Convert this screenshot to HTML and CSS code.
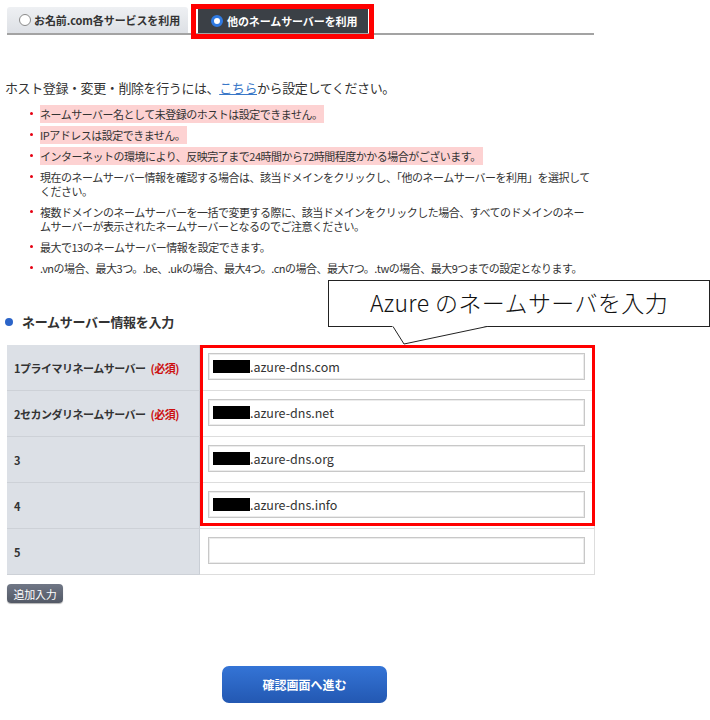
FILE: index.html
```html
<!DOCTYPE html>
<html lang="ja">
<head>
    <meta charset="UTF-8">
    <title>ネームサーバーの設定</title>
    <link rel="stylesheet" href="styles.css">
</head>
<body>
<div class="page">
    <div class="tabs">
        <div class="tab tab-off"><span class="radio"></span>お名前.com各サービスを利用</div>
        <div class="tab tab-on"><span class="radio"></span>他のネームサーバーを利用</div>
    </div>
    <div class="mark mark-tab"></div>

    <p class="intro">ホスト登録・変更・削除を行うには、<a href="#">こちら</a>から設定してください。</p>

    <ul class="notes">
        <li><span class="warn">ネームサーバー名として未登録のホストは設定できません。</span></li>
        <li><span class="warn">IPアドレスは設定できません。</span></li>
        <li><span class="warn">インターネットの環境により、反映完了まで24時間から72時間程度かかる場合がございます。</span></li>
        <li>現在のネームサーバー情報を確認する場合は、該当ドメインをクリックし、「他のネームサーバーを利用」を選択してください。</li>
        <li>複数ドメインのネームサーバーを一括で変更する際に、該当ドメインをクリックした場合、すべてのドメインのネームサーバーが表示されたネームサーバーとなるのでご注意ください。</li>
        <li>最大で13のネームサーバー情報を設定できます。</li>
        <li>.vnの場合、最大3つ。.be、.ukの場合、最大4つ。.cnの場合、最大7つ。.twの場合、最大9つまでの設定となります。</li>
    </ul>

    <h2 class="section">ネームサーバー情報を入力</h2>

    <table class="ns-table">
        <tr>
            <th>1プライマリネームサーバー <span class="req">(必須)</span></th>
            <td><div class="field"><span class="hide"></span>.azure-dns.com</div></td>
        </tr>
        <tr>
            <th>2セカンダリネームサーバー <span class="req">(必須)</span></th>
            <td><div class="field"><span class="hide"></span>.azure-dns.net</div></td>
        </tr>
        <tr>
            <th>3</th>
            <td><div class="field"><span class="hide"></span>.azure-dns.org</div></td>
        </tr>
        <tr>
            <th>4</th>
            <td><div class="field"><span class="hide"></span>.azure-dns.info</div></td>
        </tr>
        <tr>
            <th>5</th>
            <td><div class="field"></div></td>
        </tr>
    </table>
    <div class="mark mark-table"></div>

    <button class="btn-add">追加入力</button>

    <button class="btn-submit">確認画面へ進む</button>

    <!-- annotation -->
    <div class="callout">Azure のネームサーバを入力</div>
    <svg class="callout-tail" width="100" height="22" viewBox="0 0 100 22">
        <polygon points="1,0 13,18 97,0" fill="#fff"/>
        <polyline points="2,0.5 13,18 96,0.5" fill="none" stroke="#222" stroke-width="1"/>
    </svg>
</div>
</body>
</html>
```

FILE: styles.css
```css
body {
    margin: 0;
    padding: 0;
    font-family: "Noto Sans CJK JP", sans-serif;
    color: #333;
    background: #fff;
}

.page {
    position: relative;
    width: 710px;
    height: 720px;
    overflow: hidden;
}

/* tabs */
.tabs {
    display: flex;
    gap: 10px;
    margin: 7px 0 0 7px;
    width: 587px;
    border-bottom: 2px solid #a3a3a3;
}

.tab {
    display: flex;
    align-items: center;
    box-sizing: border-box;
    font-size: 11px;
    font-weight: bold;
    letter-spacing: -0.1px;
}

.tab-off {
    width: 181px;
    height: 26px;
    padding-left: 12px;
    background: linear-gradient(#eef0f3, #dde0e5);
    border-radius: 3px 3px 0 0;
    color: #333;
}

.tab-on {
    width: 170px;
    height: 24px;
    margin-top: 2px;
    padding-left: 13px;
    background: #3b4046;
    color: #fff;
}

.radio {
    width: 12px;
    height: 12px;
    box-sizing: border-box;
    border-radius: 50%;
    border: 1px solid #8a8a8a;
    background: #fff;
    margin-right: 3px;
}

.tab-on .radio {
    border: 3px solid #2f7ae2;
    margin-right: 4px;
}

/* red annotation frames */
.mark {
    position: absolute;
    box-sizing: border-box;
    border: 3px solid #ff0000;
}

.mark-tab {
    left: 191px;
    top: 4px;
    width: 183px;
    height: 35px;
    border-width: 5px;
}

.mark-table {
    left: 200px;
    top: 345px;
    width: 395px;
    height: 181px;
}

/* text */
.intro {
    margin: 43px 0 0 5px;
    font-size: 13px;
    line-height: 20px;
    letter-spacing: -0.4px;
}

.intro a {
    color: #3a78c8;
    text-decoration: underline;
}

.notes {
    list-style: none;
    margin: 9px 0 0 40px;
    padding: 0;
    width: 553px;
}

.notes li {
    position: relative;
    font-size: 11px;
    line-height: 14px;
    margin-bottom: 7px;
    letter-spacing: -0.5px;
}

.notes li::before {
    content: "";
    position: absolute;
    left: -10px;
    top: 5px;
    width: 3px;
    height: 3px;
    border-radius: 50%;
    background: #e60012;
}

.warn {
    background: #fdd2d2;
    padding: 1px 2px 1px 0;
}

.section {
    display: flex;
    align-items: center;
    margin: 38px 0 0 5px;
    font-size: 13px;
    line-height: 18px;
    font-weight: bold;
    letter-spacing: -0.3px;
}

.section::before {
    content: "";
    width: 8px;
    height: 8px;
    border-radius: 50%;
    background: #2b64c8;
    margin-right: 9px;
}

/* table */
.ns-table {
    margin: 14px 0 0 7px;
    width: 588px;
    border-collapse: collapse;
}

.ns-table th {
    width: 186px;
    padding: 0 0 0 7px;
    text-align: left;
    font-size: 11px;
    font-weight: bold;
    letter-spacing: -0.5px;
    background: #dce0e6;
    border-bottom: 1px solid #cdd1d7;
    border-right: 1px solid #c9ced5;
}

.ns-table td {
    padding: 8px 9px 10px 8px;
    border-bottom: 1px solid #dddddd;
    border-right: 1px solid #dddddd;
}

.req {
    color: #cc1010;
    margin-left: 3px;
}

.field {
    display: flex;
    align-items: center;
    box-sizing: border-box;
    width: 377px;
    height: 27px;
    padding-left: 4px;
    border: 1px solid #c8c8c8;
    box-shadow: inset 0 0 0 1px #ececec;
    font-size: 12.5px;
    color: #333;
}

.hide {
    display: inline-block;
    width: 37px;
    height: 13px;
    background: #000;
}

/* buttons */
.btn-add {
    display: block;
    margin: 9px 0 0 7px;
    width: 56px;
    height: 19px;
    padding: 0;
    border: none;
    border-radius: 4px;
    background: linear-gradient(#707786, #535966);
    color: #fff;
    font-family: inherit;
    font-size: 11px;
    letter-spacing: -0.3px;
    box-shadow: 0 1px 1px rgba(0, 0, 0, 0.3);
}

.btn-submit {
    display: block;
    margin: 63px 0 0 222px;
    width: 165px;
    height: 37px;
    border: none;
    border-radius: 7px;
    background: linear-gradient(#3474d6, #2358b2);
    color: #fff;
    font-family: inherit;
    font-size: 12px;
    font-weight: bold;
}

/* speech bubble */
.callout {
    position: absolute;
    left: 328px;
    top: 280px;
    width: 382px;
    height: 47px;
    box-sizing: border-box;
    border: 1px solid #222;
    background: #fff;
    text-align: center;
    font-size: 23px;
    font-weight: 300;
    letter-spacing: 0.4px;
    line-height: 42px;
    color: #111;
}

.callout-tail {
    position: absolute;
    left: 391px;
    top: 326px;
}
```
